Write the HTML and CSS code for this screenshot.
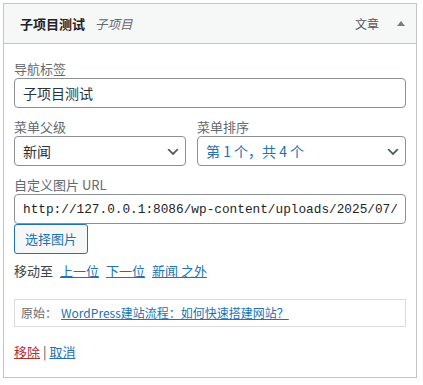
FILE: index.html
```html
<!DOCTYPE html>
<html lang="zh-CN">
<head>
<meta charset="utf-8">
<title>菜单项</title>
<link rel="stylesheet" href="styles.css">
</head>
<body>
<div class="menu-item">
  <div class="handle">
    <span class="item-title">子项目测试</span>
    <span class="item-sub">子项目</span>
    <span class="spacer"></span>
    <span class="item-type">文章</span>
    <svg class="toggle" width="8" height="5" viewBox="0 0 8 5" aria-hidden="true"><path d="M4 0L8 5H0Z" fill="#787c82"/></svg>
  </div>
  <div class="settings">
    <div class="field">
      <label class="lbl">导航标签</label>
      <input class="text-input" type="text" value="子项目测试">
    </div>
    <div class="field row">
      <div class="col">
        <label class="lbl">菜单父级</label>
        <div class="select">
          <span>新闻</span>
          <svg class="chev" width="16" height="16" viewBox="0 0 20 20" aria-hidden="true"><path d="M5 6l5 5 5-5 2 1-7 7-7-7 2-1z" fill="#50575e"/></svg>
        </div>
      </div>
      <div class="col">
        <label class="lbl">菜单排序</label>
        <div class="select hover">
          <span>第 1 个，共 4 个</span>
          <svg class="chev" width="16" height="16" viewBox="0 0 20 20" aria-hidden="true"><path d="M5 6l5 5 5-5 2 1-7 7-7-7 2-1z" fill="#50575e"/></svg>
        </div>
      </div>
    </div>
    <div class="field last">
      <label class="lbl">自定义图片 URL</label>
      <input class="text-input mono" type="text" value="http://127.0.0.1:8086/wp-content/uploads/2025/07/image.png">
      <button class="btn" type="button">选择图片</button>
    </div>
    <div class="move">
      <span class="move-label">移动至</span>
      <a href="#">上一位</a>
      <a href="#">下一位</a>
      <a href="#">新闻 之外</a>
    </div>
    <div class="original">原始：<a href="#">WordPress建站流程：如何快速搭建网站？</a></div>
    <div class="actions">
      <a href="#" class="remove">移除</a> <span class="sep">|</span> <a href="#" class="cancel">取消</a>
    </div>
  </div>
</div>
</body>
</html>
```

FILE: styles.css
```css
* { box-sizing: border-box; }

body {
  margin: 3px 0 0 3px;
  background: #fff;
  font-family: "Noto Sans CJK SC", "Liberation Sans", sans-serif;
  font-size: 13px;
  color: #3c434a;
}

.menu-item {
  width: 414px;
  border: 1px solid #c3c4c7;
}

.handle {
  display: flex;
  align-items: center;
  background: #f6f7f7;
  border-bottom: 1px solid #c3c4c7;
  padding: 10px 11px 9px 16px;
  line-height: 20px;
}

.item-title {
  font-weight: 700;
  color: #1d2327;
  font-size: 13px;
}

.item-sub {
  margin-left: 10px;
  font-style: italic;
  color: #646970;
  font-size: 12.5px;
}

.spacer { flex: 1; }

.item-type {
  font-size: 12px;
  color: #50575e;
}

.toggle {
  margin-left: 18px;
  margin-top: -1px;
}

.settings {
  padding: 16px 10px 16px 10px;
}

.field { margin-bottom: 10px; }
.field.last { margin-bottom: 0; }

.row {
  display: grid;
  grid-template-columns: 172px 1fr;
  column-gap: 11px;
}

.lbl {
  display: block;
  line-height: 18px;
  color: #646970;
  font-size: 13px;
}

.text-input {
  display: block;
  width: 100%;
  height: 30px;
  margin: 0;
  padding: 0 8px;
  border: 1px solid #8c8f94;
  border-radius: 4px;
  background: #fff;
  color: #2c3338;
  font-family: "Noto Sans CJK SC", "Liberation Sans", sans-serif;
  font-size: 14px;
  outline: none;
}

.text-input.mono {
  font-family: "Liberation Mono", "DejaVu Sans Mono", monospace;
  font-size: 12.75px;
  color: #1d2327;
}

.select {
  display: flex;
  align-items: center;
  justify-content: space-between;
  height: 30px;
  padding: 0 4px 0 8px;
  border: 1px solid #8c8f94;
  border-radius: 4px;
  background: #fff;
  color: #2c3338;
  font-size: 14px;
}

.select.hover { color: #2271b1; }

.chev { margin-top: 1px; flex: none; }

.btn {
  display: block;
  height: 30px;
  margin: 0;
  padding: 0 10px;
  border: 1px solid #2271b1;
  border-radius: 3px;
  background: #f6f7f7;
  color: #2271b1;
  font-family: "Noto Sans CJK SC", "Liberation Sans", sans-serif;
  font-size: 13px;
  line-height: 28px;
}

.move {
  display: flex;
  gap: 7px;
  margin-top: 8px;
  line-height: 18px;
}

.move-label { color: #3c434a; }

a {
  color: #2271b1;
  text-decoration: underline;
}

.original {
  margin-top: 19px;
  padding: 4px 5px 4px 6px;
  border: 1px solid #dcdcde;
  color: #646970;
  font-size: 12px;
  line-height: 18px;
}

.original a { margin-left: 4px; }

.actions {
  margin-top: 16px;
  line-height: 18px;
  font-size: 13px;
}

.remove { color: #b32d2e; }
.sep { color: #50575e; }
```
